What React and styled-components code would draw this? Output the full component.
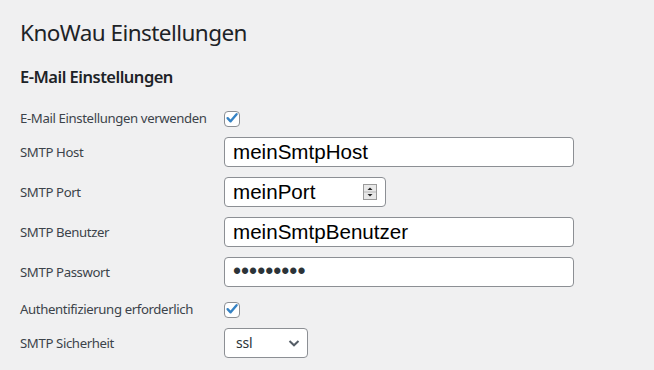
import { styled, createGlobalStyle } from 'styled-components';

const GlobalStyle = createGlobalStyle`
  html, body {
    margin: 0;
    padding: 0;
    background: #f0f0f1;
  }
  body {
    font-family: "Noto Sans", "Open Sans", sans-serif;
    color: #3c434a;
  }
`;

const Page = styled.div`
  padding: 18px 20px 0 20px;
  width: 654px;
  height: 370px;
  box-sizing: border-box;
  overflow: hidden;
`;

const Title = styled.h1`
  margin: 0;
  font-size: 22.5px;
  font-weight: 400;
  line-height: 1.3;
  color: #1d2327;
  letter-spacing: -0.55px;
`;

const SectionTitle = styled.h2`
  margin: 19px 0 0 0;
  font-size: 16.5px;
  font-weight: 600;
  line-height: 1.3;
  color: #1d2327;
  letter-spacing: -0.5px;
`;

const Form = styled.div`
  display: flex;
  flex-direction: column;
  gap: 10px;
  margin-top: 22px;
`;

const Row = styled.div`
  display: flex;
  align-items: center;
  min-height: 17px;
  margin-top: ${(props) => props.$extra || 0}px;
`;

const Label = styled.label`
  width: 204px;
  flex: none;
  font-size: 13.2px;
  line-height: 16px;
  color: #3c434a;
  letter-spacing: -0.38px;
`;

const CheckWrap = styled.span`
  position: relative;
  width: 16px;
  height: 16px;
  display: inline-block;
  svg {
    position: absolute;
    left: 0;
    top: 0;
    pointer-events: none;
  }
`;

const CheckBox = styled.input`
  appearance: none;
  margin: 0;
  width: 16px;
  height: 16px;
  box-sizing: border-box;
  border: 1px solid #8c8f94;
  border-radius: 4px;
  background: #fff;
`;

const TextInput = styled.input`
  box-sizing: border-box;
  width: ${(props) => props.$width}px;
  height: 30px;
  margin: 0;
  padding: 0 8px;
  border: 1px solid #8c8f94;
  border-radius: 4px;
  background: #fff;
  font-family: "Liberation Sans", Arial, sans-serif;
  font-size: 20.6px;
  color: #000;
  outline: none;
`;

const PasswordInput = styled(TextInput)`
  font-size: 23px;
  color: #2c3338;
`;

const FieldWrap = styled.span`
  position: relative;
  display: inline-block;
`;

const Spinner = styled.svg`
  position: absolute;
  right: 9px;
  top: 7px;
`;

const Select = styled.select`
  appearance: none;
  box-sizing: border-box;
  width: 84px;
  height: 30px;
  margin: 0;
  padding: 0 24px 0 11px;
  border: 1px solid #8c8f94;
  border-radius: 4px;
  background: #fff;
  font-family: "Noto Sans", "Open Sans", sans-serif;
  font-size: 14px;
  letter-spacing: -0.2px;
  color: #2c3338;
`;

const Chevron = styled.svg`
  position: absolute;
  right: 6px;
  top: 7px;
  pointer-events: none;
`;

const Check = ({ label, extra }) => (
  <Row $extra={extra}>
    <Label>{label}</Label>
    <CheckWrap>
      <CheckBox type="checkbox" defaultChecked />
      <svg width="16" height="16" viewBox="0 0 16 16">
        <path
          d="M3.6 8.2 L6.6 11.3 L12.6 4.2"
          fill="none"
          stroke="#3582c4"
          strokeWidth="2.4"
          strokeLinecap="round"
          strokeLinejoin="round"
        />
      </svg>
    </CheckWrap>
  </Row>
);

const Field = ({ label, children }) => (
  <Row>
    <Label>{label}</Label>
    {children}
  </Row>
);

export default function App() {
  return (
    <Page>
      <GlobalStyle />
      <Title>KnoWau Einstellungen</Title>
      <SectionTitle>E-Mail Einstellungen</SectionTitle>
      <Form>
        <Check label="E-Mail Einstellungen verwenden" />
        <Field label="SMTP Host">
          <TextInput $width={350} defaultValue="meinSmtpHost" />
        </Field>
        <Field label="SMTP Port">
          <FieldWrap>
            <TextInput $width={162} defaultValue="meinPort" />
            <Spinner width="14" height="16" viewBox="0 0 14 16">
              <rect x="0.5" y="0.5" width="13" height="15" fill="#e8e8e8" stroke="#9a9a9a" />
              <line x1="1" y1="8" x2="13" y2="8" stroke="#b8b8b8" />
              <path d="M4.5 6 L7 3.5 L9.5 6 Z" fill="#222" />
              <path d="M4.5 10 L7 12.5 L9.5 10 Z" fill="#222" />
            </Spinner>
          </FieldWrap>
        </Field>
        <Field label="SMTP Benutzer">
          <TextInput $width={350} defaultValue="meinSmtpBenutzer" />
        </Field>
        <Field label="SMTP Passwort">
          <PasswordInput type="password" $width={350} defaultValue="123456789" />
        </Field>
        <Check label="Authentifizierung erforderlich" extra={4} />
        <Field label="SMTP Sicherheit">
          <FieldWrap>
            <Select defaultValue="ssl">
              <option value="ssl">ssl</option>
              <option value="tls">tls</option>
              <option value="none">keine</option>
            </Select>
            <Chevron width="16" height="16" viewBox="0 0 16 16">
              <path
                d="M3.5 6 L8 10.3 L12.5 6"
                fill="none"
                stroke="#555d66"
                strokeWidth="2"
              />
            </Chevron>
          </FieldWrap>
        </Field>
      </Form>
    </Page>
  );
}
